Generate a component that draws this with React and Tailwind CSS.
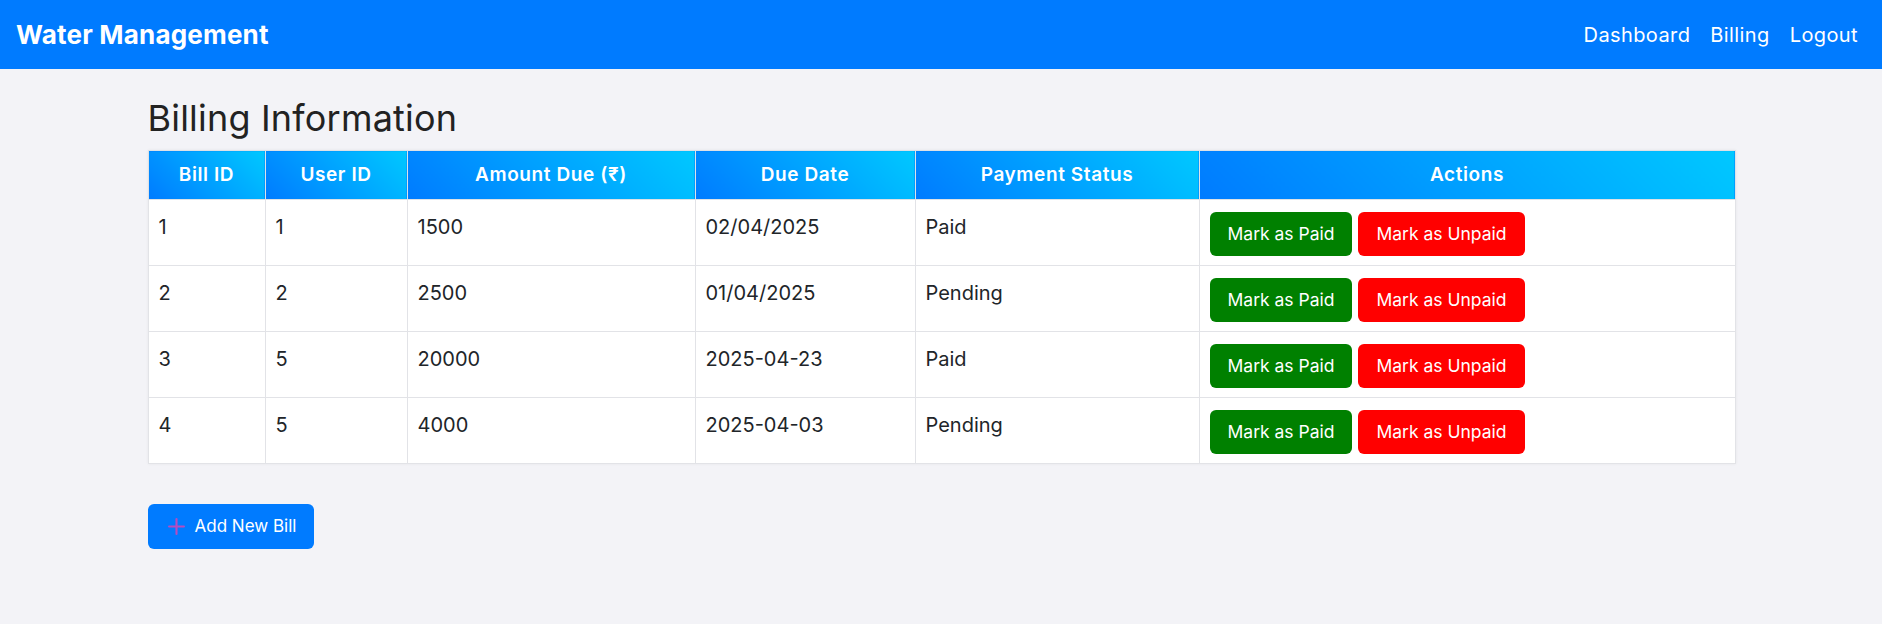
import React from 'react'

const bills = [
  { id: 1, userId: 1, amount: 1500, due: '02/04/2025', status: 'Paid' },
  { id: 2, userId: 2, amount: 2500, due: '01/04/2025', status: 'Pending' },
  { id: 3, userId: 5, amount: 20000, due: '2025-04-23', status: 'Paid' },
  { id: 4, userId: 5, amount: 4000, due: '2025-04-03', status: 'Pending' },
]

const headers = [
  { label: 'Bill ID', width: 'w-[117px]' },
  { label: 'User ID', width: 'w-[142px]' },
  { label: 'Amount Due (₹)', width: 'w-[288px]' },
  { label: 'Due Date', width: 'w-[220px]' },
  { label: 'Payment Status', width: 'w-[284px]' },
  { label: 'Actions', width: 'w-[536px]' },
]

function PlusIcon() {
  return (
    <svg width="17" height="17" viewBox="0 0 16 16" fill="none">
      <path d="M8 1v14M1 8h14" stroke="#b54cc0" strokeWidth="2" strokeLinecap="round" />
    </svg>
  )
}

export default function App() {
  const cell = 'border border-[#e2e3e7] pl-[10px] pr-3 pt-3 pb-[9px] align-top'

  return (
    <div className="min-h-[624px] bg-[#f3f3f7] font-['Inter','Noto_Sans',sans-serif] text-[#212529]">
      {/* top bar */}
      <nav className="flex h-[69px] items-center justify-between bg-[#007bff] pl-4 pr-6 text-white">
        <div className="text-[26px] font-bold tracking-[0.2px]">Water Management</div>
        <div className="flex items-center gap-[20px] text-[20px] tracking-[0.4px]">
          <a href="#">Dashboard</a>
          <a href="#">Billing</a>
          <a href="#">Logout</a>
        </div>
      </nav>

      <main className="mx-auto w-[1587px] pt-[28px]">
        <h2 className="mb-[10px] text-[36px] leading-[43px] font-normal tracking-[0.2px] text-[#222]">Billing Information</h2>

        <table className="w-full table-fixed border-collapse bg-white shadow-[0_0_3px_rgba(0,0,0,0.06)]">
          <thead>
            <tr>
              {headers.map((h) => (
                <th
                  key={h.label}
                  className={`${h.width} h-[49px] border border-[#dee2e6] bg-[linear-gradient(45deg,#007bff,#00c8ff)] text-center text-[19px] font-semibold tracking-[0.6px] text-white`}
                >
                  {h.label}
                </th>
              ))}
            </tr>
          </thead>
          <tbody className="text-[20px] leading-[30px]">
            {bills.map((b) => (
              <tr key={b.id}>
                <td className={cell}>{b.id}</td>
                <td className={cell}>{b.userId}</td>
                <td className={cell}>{b.amount}</td>
                <td className={cell}>{b.due}</td>
                <td className={cell}>{b.status}</td>
                <td className={cell}>
                  <div className="flex gap-[6px]">
                    <button className="h-[44px] rounded-md bg-[#008000] px-[18px] text-[17.5px] text-white">Mark as Paid</button>
                    <button className="h-[44px] rounded-md bg-[#ff0000] px-[18px] text-[17.5px] text-white">Mark as Unpaid</button>
                  </div>
                </td>
              </tr>
            ))}
          </tbody>
        </table>

        <button className="mt-[40px] flex h-[45px] w-[166px] items-center gap-[10px] rounded-md bg-[#007bff] pl-[20px] text-[17px] text-white">
          <PlusIcon />
          Add New Bill
        </button>
      </main>
    </div>
  )
}
